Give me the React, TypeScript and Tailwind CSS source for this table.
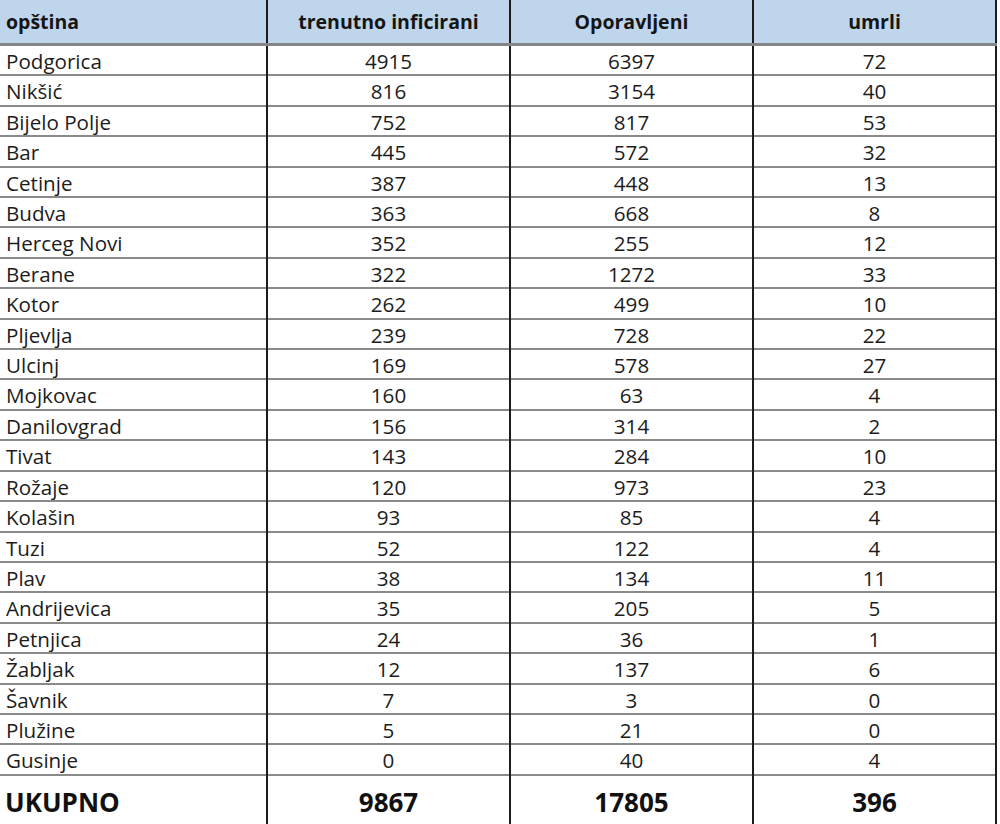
const rows: [string, number, number, number][] = [
  ["Podgorica", 4915, 6397, 72],
  ["Nikšić", 816, 3154, 40],
  ["Bijelo Polje", 752, 817, 53],
  ["Bar", 445, 572, 32],
  ["Cetinje", 387, 448, 13],
  ["Budva", 363, 668, 8],
  ["Herceg Novi", 352, 255, 12],
  ["Berane", 322, 1272, 33],
  ["Kotor", 262, 499, 10],
  ["Pljevlja", 239, 728, 22],
  ["Ulcinj", 169, 578, 27],
  ["Mojkovac", 160, 63, 4],
  ["Danilovgrad", 156, 314, 2],
  ["Tivat", 143, 284, 10],
  ["Rožaje", 120, 973, 23],
  ["Kolašin", 93, 85, 4],
  ["Tuzi", 52, 122, 4],
  ["Plav", 38, 134, 11],
  ["Andrijevica", 35, 205, 5],
  ["Petnjica", 24, 36, 1],
  ["Žabljak", 12, 137, 6],
  ["Šavnik", 7, 3, 0],
  ["Plužine", 5, 21, 0],
  ["Gusinje", 0, 40, 4],
];

const cols = "grid grid-cols-[268px_243px_243px_243px] w-[997px]";

export default function App() {
  return (
    <div className="w-[1000px] h-[824px] overflow-hidden bg-white text-[#1c1c1c] font-['Open_Sans',sans-serif]">
      {/* zaglavlje */}
      <div className={`${cols} h-[46px] bg-[#bfd5ec] border-b-[3px] border-[#858585] text-[19.5px] font-bold text-[#151515]`}>
        <div className="flex items-center pl-[6px] border-r-2 border-[#1c1c1c]">opština</div>
        <div className="flex items-center justify-center border-r-2 border-[#1c1c1c]">trenutno inficirani</div>
        <div className="flex items-center justify-center border-r-2 border-[#1c1c1c]">Oporavljeni</div>
        <div className="flex items-center justify-center border-r-2 border-[#1c1c1c]">umrli</div>
      </div>

      {rows.map(([name, inf, opor, umrli]) => (
        <div key={name} className={`${cols} h-[30.42px] border-b-[2.5px] border-[#8a8a8a] text-[20.6px]`}>
          <div className="flex items-center pl-[6px] border-r-2 border-[#1c1c1c]">{name}</div>
          <div className="flex items-center justify-center border-r-2 border-[#1c1c1c]">{inf}</div>
          <div className="flex items-center justify-center border-r-2 border-[#1c1c1c]">{opor}</div>
          <div className="flex items-center justify-center border-r-2 border-[#1c1c1c]">{umrli}</div>
        </div>
      ))}

      {/* ukupno */}
      <div className={`${cols} h-[52px] pb-[2px] text-[26px] font-bold text-[#111]`}>
        <div className="flex items-center pl-[5px] pt-[4px] border-r-2 border-[#1c1c1c]">UKUPNO</div>
        <div className="flex items-center justify-center pt-[4px] border-r-2 border-[#1c1c1c]">9867</div>
        <div className="flex items-center justify-center pt-[4px] border-r-2 border-[#1c1c1c]">17805</div>
        <div className="flex items-center justify-center pt-[4px] border-r-2 border-[#1c1c1c]">396</div>
      </div>
    </div>
  );
}
